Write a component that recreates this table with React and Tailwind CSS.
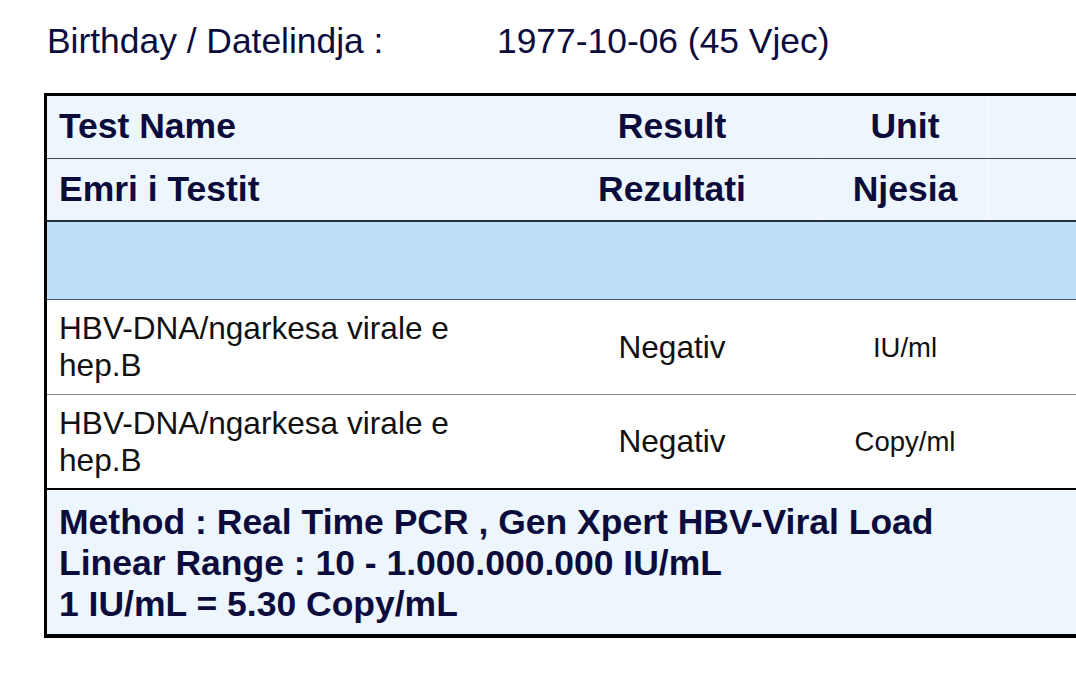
export default function App() {
  const navy = "text-[#0c0c3c]";
  return (
    <div
      className="w-[1076px] h-[678px] overflow-hidden bg-white"
      style={{ fontFamily: '"Liberation Sans", Arial, sans-serif' }}
    >
      <div className={`flex pl-[47px] pt-[21px] h-[93px] text-[35.4px] leading-[40px] ${navy}`}>
        <div className="w-[450px]">Birthday / Datelindja :</div>
        <div>1977-10-06 (45 Vjec)</div>
      </div>

      <div className="ml-[44px] w-[1100px] border-l-[3px] border-t-[3px] border-b-[4px] border-black">
        {/* Header row 1 */}
        <div className={`flex h-[63px] items-center bg-[#eef6fd] font-bold text-[35.5px] ${navy} border-b border-[#3f4655]`}>
          <div className="w-[476px] pl-[12px]">Test Name</div>
          <div className="w-[298px] h-full flex items-center justify-center">Result</div>
          <div className="w-[168px] h-full flex items-center justify-center border-x border-white/50">Unit</div>
          <div className="flex-1" />
        </div>
        {/* Header row 2 */}
        <div className={`flex h-[63px] items-center bg-[#eef6fd] font-bold text-[35.5px] ${navy} border-b-2 border-[#2c313c]`}>
          <div className="w-[476px] pl-[12px]">Emri i Testit</div>
          <div className="w-[298px] h-full flex items-center justify-center">Rezultati</div>
          <div className="w-[168px] h-full flex items-center justify-center border-x border-white/50">Njesia</div>
          <div className="flex-1" />
        </div>
        {/* Blue group row */}
        <div className="h-[78px] bg-[#bedff9] border-b border-[#4a5566]" />
        {/* Data rows */}
        {[
          { unit: "IU/ml", border: "border-b border-[#8a8a8a]" },
          { unit: "Copy/ml", border: "border-b-2 border-black" },
        ].map((r, i) => (
          <div key={i} className={`flex h-[95px] items-center bg-white text-[#111111] ${r.border}`}>
            <div className="w-[476px] pl-[12px] text-[31.6px] leading-[37px]">
              HBV-DNA/ngarkesa virale e
              <br />
              hep.B
            </div>
            <div className="w-[298px] text-center text-[31.6px] leading-[37px]">Negativ</div>
            <div className="w-[168px] text-center text-[27.5px] leading-[37px]">{r.unit}</div>
            <div className="flex-1" />
          </div>
        ))}
        {/* Footer */}
        <div className={`h-[144px] bg-[#eef6fd] pl-[12px] pt-[12px] font-bold text-[35.5px] leading-[41px] ${navy}`}>
          <div>Method : Real Time PCR , Gen Xpert HBV-Viral Load</div>
          <div>Linear Range : 10 - 1.000.000.000 IU/mL</div>
          <div>1 IU/mL = 5.30 Copy/mL</div>
        </div>
      </div>
    </div>
  );
}
